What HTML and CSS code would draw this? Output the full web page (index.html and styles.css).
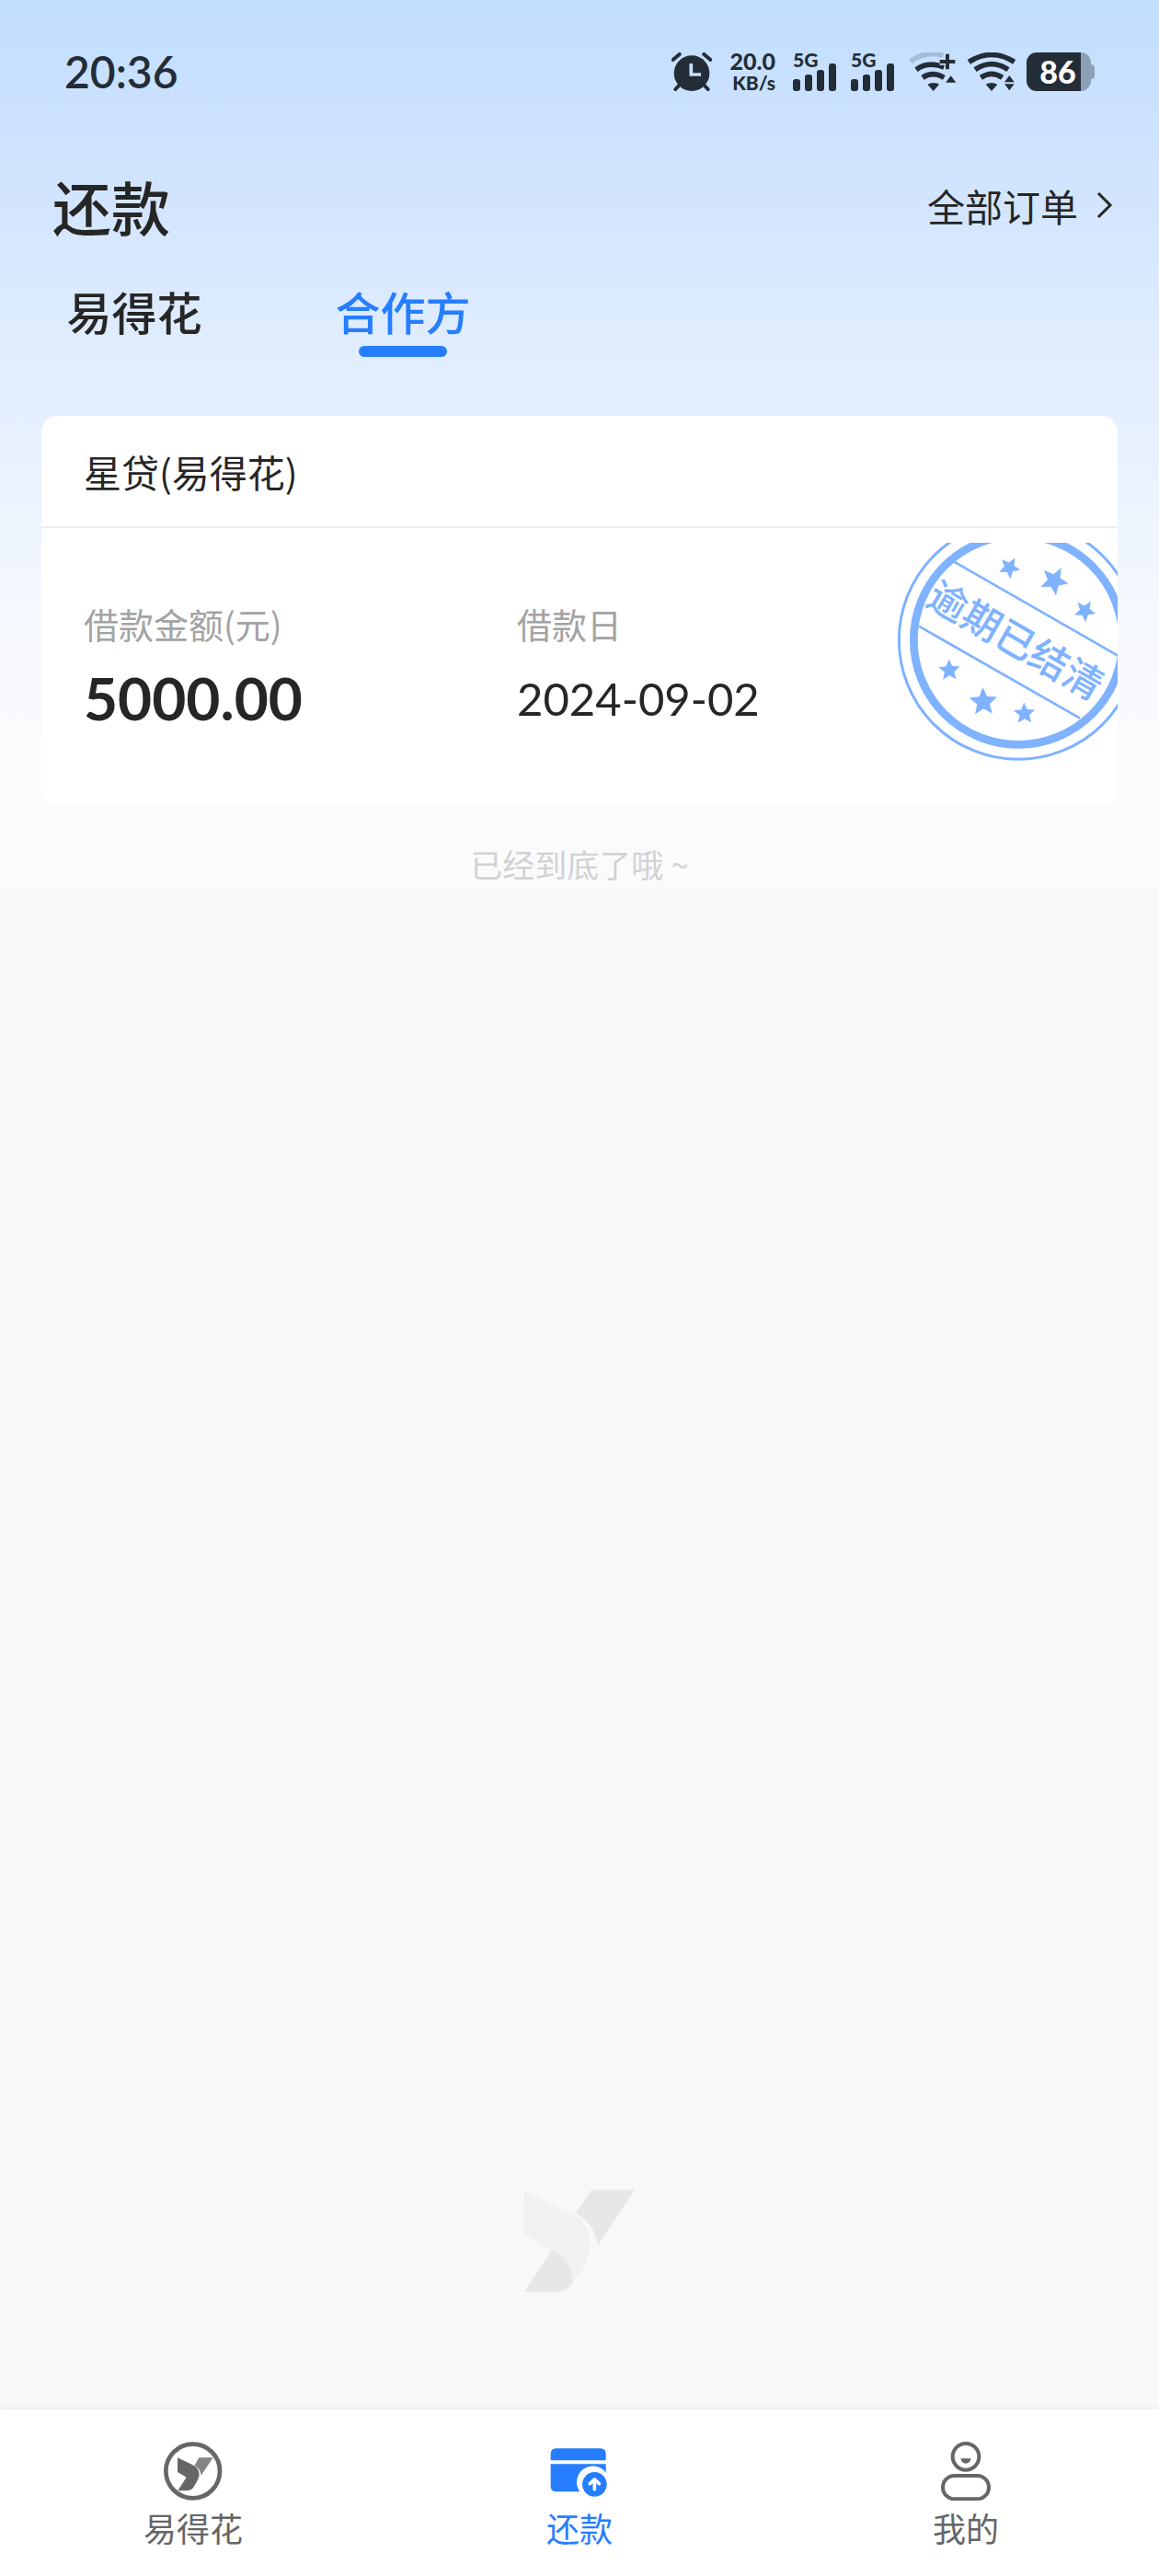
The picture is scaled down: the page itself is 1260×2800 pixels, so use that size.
FILE: index.html
```html
<!DOCTYPE html>
<html lang="zh-CN">
<head>
<meta charset="utf-8">
<meta name="viewport" content="width=device-width, initial-scale=1">
<title>还款</title>
<link rel="stylesheet" href="styles.css">
</head>
<body>
<div class="screen">
  <div class="status">
    <span class="clock">20:36</span>
    <div class="indicators">
      <svg class="alarm" width="44" height="42" viewBox="0 0 132 126" aria-hidden="true">
        <circle cx="66" cy="68" r="58" fill="currentColor"/>
        <path d="M5 24 26 6M106 6l21 18M27 105 13 120M105 105l14 15" stroke="currentColor" stroke-width="12" stroke-linecap="round"/>
        <path d="M64 36v36h32" fill="none" stroke="#c8e0fe" stroke-width="11"/>
      </svg>
      <div class="speed"><span class="speed-value">20.0</span><span class="speed-unit">KB/s</span></div>
      <div class="signal">
        <span class="signal-type">5G</span>
        <svg width="48" height="30" viewBox="0 0 48 30" fill="currentColor" aria-hidden="true"><rect y="17" width="8" height="13" rx="3"/><rect x="13" y="12" width="8" height="18" rx="3"/><rect x="26" y="7" width="8" height="23" rx="3"/><rect x="39" width="8" height="30" rx="3"/></svg>
      </div>
      <div class="signal">
        <span class="signal-type">5G</span>
        <svg width="48" height="30" viewBox="0 0 48 30" fill="currentColor" aria-hidden="true"><rect y="17" width="8" height="13" rx="3"/><rect x="13" y="12" width="8" height="18" rx="3"/><rect x="26" y="7" width="8" height="23" rx="3"/><rect x="39" width="8" height="30" rx="3"/></svg>
      </div>
      <svg class="wifi" width="52" height="42" viewBox="0 0 156 126" fill="none" stroke="currentColor" stroke-width="17" aria-hidden="true">
        <path d="M6 30Q55-8 112 10" stroke="#a3bcd8"/>
        <path d="M24 56Q62 28 115 48M45 82Q78 60 115 82"/>
        <path d="M101 30h53M127 4v52" stroke="#c8e0fe" stroke-width="22"/>
        <path d="M101 30h50M126 5v50" stroke-width="12"/>
        <path d="m61 104 19 22 19-22q-19-10-38 0zM120 98l17-22 17 22z" fill="currentColor" stroke="none"/>
      </svg>
      <svg class="wifi" width="52" height="42" viewBox="0 0 156 126" fill="none" stroke="currentColor" stroke-width="17" aria-hidden="true">
        <path d="M4 31Q78-16 152 31M24 56Q78 20 132 56M43 82Q78 58 113 82"/>
        <path d="m59 104 19 22 19-22q-19-10-38 0zM120 97l16-22 16 22zM120 103h32l-16 21z" fill="currentColor" stroke="none"/>
      </svg>
      <div class="battery"><span class="battery-level">86</span></div>
    </div>
  </div>

  <header class="header">
    <h1 class="title">还款</h1>
    <a class="all-orders" href="#orders">全部订单
      <svg width="18" height="30" viewBox="0 0 18 30" fill="none" stroke="currentColor" stroke-width="3" aria-hidden="true"><path d="m2 2 13 13L2 28"/></svg>
    </a>
  </header>

  <div class="tabs" role="tablist">
    <button class="tab" type="button" role="tab" aria-selected="false">易得花</button>
    <button class="tab tab-active" type="button" role="tab" aria-selected="true">合作方</button>
  </div>

  <main class="content">
    <article class="card">
      <h2 class="card-title">星贷(易得花)</h2>
      <div class="card-body">
        <dl class="fields">
          <div class="field"><dt>借款金额(元)</dt><dd class="amount">5000.00</dd></div>
          <div class="field"><dt>借款日</dt><dd class="date">2024-09-02</dd></div>
        </dl>
        <svg class="stamp" width="240" height="240" viewBox="75 90 720 720">
          <defs><path id="star" d="M0-40 10.600-14.600 38-12.400 17.100 5.600 23.500 32.400 0 18-23.500 32.400-17.100 5.600-38-12.400-10.600-14.600z"/></defs>
          <g fill="none" stroke="currentColor">
            <circle cx="471" cy="407" r="389" stroke-width="9"/>
            <circle cx="471" cy="407" r="341" stroke-width="26"/>
            <path d="M262 152 805 463M147 362 672 662" stroke-width="8"/>
          </g>
          <g fill="currentColor">
            <use href="#star" transform="translate(442 171) rotate(30) scale(.92)"/>
            <use href="#star" transform="translate(588 214) rotate(29) scale(1.200)"/>
            <use href="#star" transform="translate(688 312) rotate(32) scale(.92)"/>
            <use href="#star" transform="translate(246 506) rotate(-2) scale(.92)"/>
            <use href="#star" transform="translate(357 609) rotate(-2) scale(1.200)"/>
            <use href="#star" transform="translate(491 647) rotate(-2) scale(.92)"/>
            <text class="stamp-text" x="462" y="456" text-anchor="middle" transform="rotate(30 465 410)">逾期已结清</text>
          </g>
        </svg>
      </div>
    </article>
    <p class="end">已经到底了哦 ~</p>
    <svg class="watermark" width="120" height="111" viewBox="90 90 360 333" aria-hidden="true">
      <path d="M310 90H450L330 272C325 228 300 190 257 168z" fill="#e7e7e8"/>
      <path d="M180 287 90 423H190C225 423 243 405 248 390 250 335 215 300 180 287z" fill="#e7e7e8"/>
      <path d="M90 93 250 172C290 192 305 228 305 270 305 310 275 365 246 390 248 335 215 302 180 287L90 235z" fill="#f1f1f2"/>
    </svg>
  </main>

  <nav class="nav">
    <a class="nav-item" href="#home">
      <svg width="64" height="64" viewBox="145 161 192 192" fill="currentColor" aria-hidden="true">
        <circle cx="240" cy="257" r="88" fill="none" stroke="currentColor" stroke-width="14"/>
        <path d="M190 213 238 236Q261 247 261 268 261 280 241 311 234 321 216 321H191L219 277 190 260z"/>
        <path d="M260 213H306L267 271Q265 249 245 239z" opacity=".8"/>
      </svg>
      <span>易得花</span>
    </a>
    <a class="nav-item nav-active" href="#repay" aria-current="page">
      <svg width="64" height="64" viewBox="113 161 192 192" fill="currentColor" aria-hidden="true">
        <path d="M115 222V201Q115 183 133 183H277Q295 183 295 201V222zM115 234H295V262A51 51 0 0 0 210 324H133Q115 324 115 306z"/>
        <circle cx="258" cy="300" r="40"/>
        <path d="M258 316V286M243 298 258 284 273 298" fill="none" stroke="#fff" stroke-width="11" stroke-linecap="round" stroke-linejoin="round"/>
      </svg>
      <span>还款</span>
    </a>
    <a class="nav-item" href="#mine">
      <svg width="64" height="64" viewBox="174 161 192 192" fill="none" stroke="currentColor" stroke-width="12" aria-hidden="true">
        <circle cx="270" cy="210" r="43"/>
        <rect x="195" y="272" width="150" height="76" rx="38"/>
        <path d="M253 216H287Q283 232 270 232T253 216z" fill="currentColor" stroke="none"/>
      </svg>
      <span>我的</span>
    </a>
  </nav>
</div>
</body>
</html>
```
FILE: styles.css
```css
* {
  box-sizing: border-box;
}

body {
  margin: 0;
  background: #f7f8fa;
  color: #262626;
  font-family: "Noto Sans CJK SC", "Noto Sans", sans-serif;
}

h1, h2, p, dl, dd {
  margin: 0;
}

a {
  color: inherit;
  text-decoration: none;
}

svg {
  display: block;
  flex: none;
}

.screen {
  display: flex;
  flex-direction: column;
  min-height: 100vh;
  background: linear-gradient(#c1deff 0, #cde2fe 140px, #d6e7fe 260px, #e2eefe 400px, #eaf3fe 530px, #f5f8fe 660px, #fafbfd 800px, #fafbfd 967px, transparent 967px) no-repeat;
}

/* System status bar */
.status {
  display: flex;
  justify-content: space-between;
  align-items: center;
  padding: 44px 74px 44px 70px;
  color: #232d37;
  font-family: Lato, "Noto Sans", sans-serif;
}

.clock {
  font-size: 48px;
  line-height: 68px;
  font-weight: 600;
}

.indicators {
  display: flex;
  align-items: center;
}

.speed {
  display: flex;
  flex-direction: column;
  align-items: flex-end;
  width: 54px;
  margin: 0 19px 0 15px;
  font-weight: 900;
}

.speed-value {
  font-size: 25px;
  line-height: 24px;
}

.speed-unit {
  font-size: 21px;
  line-height: 24px;
}

.signal {
  display: grid;
  width: 48px;
  height: 42px;
  margin-right: 15px;
}

.signal > * {
  grid-area: 1 / 1;
  align-self: end;
}

.signal .signal-type {
  align-self: start;
  font-size: 21px;
  line-height: 16px;
  font-weight: 900;
}

.wifi {
  margin-right: 12px;
}

.battery {
  position: relative;
  display: flex;
  align-items: center;
  justify-content: center;
  width: 70px;
  height: 42px;
  padding-right: 2px;
  border-radius: 11px;
  background: linear-gradient(90deg, #232d37 59px, #8ba1b8 59px);
  color: #fff;
}

.battery::after {
  content: "";
  position: absolute;
  left: 100%;
  top: 13px;
  width: 4px;
  height: 16px;
  border-radius: 0 4px 4px 0;
  background: #8ba1b8;
}

.battery-level {
  font-size: 34px;
  line-height: 42px;
  font-weight: 900;
}

/* Page heading */
.header {
  display: flex;
  justify-content: space-between;
  align-items: center;
  padding: 27px 50px 0 57px;
}

.title {
  font-size: 64px;
  line-height: 80px;
  font-weight: 500;
}

.all-orders {
  display: flex;
  align-items: center;
  gap: 20px;
  font-size: 41px;
  line-height: 60px;
}

.tabs {
  display: flex;
  padding-top: 45px;
}

.tab {
  display: flex;
  flex-direction: column;
  align-items: center;
  gap: 8px;
  width: 292px;
  padding: 0;
  border: 0;
  background: none;
  color: inherit;
  font: 500 49px/60px "Noto Sans CJK SC", sans-serif;
}

.tab::after {
  content: "";
  width: 96px;
  height: 12px;
  border-radius: 6px;
}

.tab-active {
  color: #267eff;
}

.tab-active::after {
  background: #267eff;
}

/* Loan list */
.content {
  flex: 1;
  display: flex;
  flex-direction: column;
  padding: 64px 45px 128px;
}

.card {
  overflow: hidden;
  border-radius: 18px;
  background: #fff;
}

.card-title {
  padding: 30px 46px;
  border-bottom: 2px solid #ececec;
  font-size: 41px;
  line-height: 60px;
  font-weight: 400;
}

.card-body {
  position: relative;
  padding: 76px 0 80px;
}

.fields {
  display: grid;
  grid-template-columns: 40% 1fr;
  column-gap: 3px;
}

.field {
  padding-left: 46px;
}

.field dt {
  color: #a3a3a3;
  font-size: 38px;
  line-height: 56px;
}

.field dd {
  margin-top: 17px;
  font-family: Lato, "Noto Sans", sans-serif;
  line-height: 72px;
}

.amount {
  font-size: 64px;
  font-weight: 700;
}

.date {
  font-size: 49px;
}

.stamp {
  position: absolute;
  top: 16px;
  right: 0;
  color: #7fb2ff;
}

.stamp-text {
  font-size: 127px;
  font-weight: 500;
}

.end {
  margin-top: 38px;
  color: #d1d2d4;
  font-size: 35px;
  line-height: 52px;
  text-align: center;
}

.watermark {
  align-self: center;
  margin-top: auto;
}

/* Bottom navigation */
.nav {
  display: flex;
  justify-content: center;
  padding: 35px 0 29px;
  background: #fff;
  box-shadow: 0 0 8px rgba(0, 0, 0, 0.08);
}

.nav-item {
  display: flex;
  flex: 1;
  flex-direction: column;
  align-items: center;
  gap: 5px;
  color: #666;
  font-size: 36px;
  line-height: 48px;
}

.nav-active {
  color: #267eff;
}
```
